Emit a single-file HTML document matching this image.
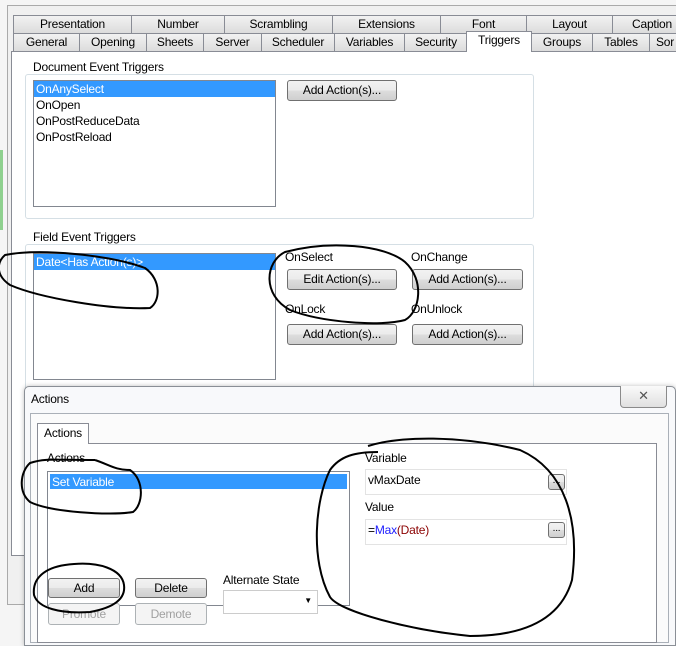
<!DOCTYPE html>
<html><head><meta charset="utf-8"><style>
*{box-sizing:border-box;margin:0;padding:0}
body{width:676px;height:638px;position:relative;overflow:hidden;background:#f5f5f5;font-family:"Liberation Sans",sans-serif;font-size:12px;color:#000;letter-spacing:-0.2px}
.a{position:absolute}
.tab{position:absolute;height:18px;border:1px solid #898c95;border-bottom:none;background:linear-gradient(#f2f2f2,#dcdcdc);text-align:center;line-height:17px;font-size:12px}
.btn{position:absolute;border:1px solid #707070;border-radius:3px;background:linear-gradient(#f2f2f2 0%,#ebebeb 50%,#dddddd 51%,#cfcfcf 100%);text-align:center;font-size:12px}
.grp{position:absolute;border:1px solid #d5dfe5;border-radius:3px}
.lbl{position:absolute;background:#fff;padding:0 2px;font-size:12px}
.list{position:absolute;border:1px solid #828790;background:#fff}
.sel{background:#3399ff;color:#fff;height:16px;line-height:16px;padding-left:2px}
.it{height:16px;line-height:16px;padding-left:2px}
.dis{color:#a0a0a0;border-color:#adb2b5;background:#f4f4f4}
</style></head><body>
<div class="a" style="left:7px;top:5px;width:680px;height:600px;border:1px solid #aaa;background:#f0f0f0"></div>
<div class="tab" style="left:13px;top:15px;width:119px">Presentation</div>
<div class="tab" style="left:131px;top:15px;width:94px">Number</div>
<div class="tab" style="left:224px;top:15px;width:109px">Scrambling</div>
<div class="tab" style="left:332px;top:15px;width:109px">Extensions</div>
<div class="tab" style="left:440px;top:15px;width:87px">Font</div>
<div class="tab" style="left:526px;top:15px;width:87px">Layout</div>
<div class="tab" style="left:612px;top:15px;width:80px">Caption</div>
<div class="tab" style="left:13px;top:33px;width:67px">General</div>
<div class="tab" style="left:79px;top:33px;width:68px">Opening</div>
<div class="tab" style="left:146px;top:33px;width:58px">Sheets</div>
<div class="tab" style="left:203px;top:33px;width:59px">Server</div>
<div class="tab" style="left:261px;top:33px;width:74px">Scheduler</div>
<div class="tab" style="left:334px;top:33px;width:71px">Variables</div>
<div class="tab" style="left:404px;top:33px;width:64px">Security</div>
<div class="tab" style="left:531px;top:33px;width:62px">Groups</div>
<div class="tab" style="left:592px;top:33px;width:58px">Tables</div>
<div class="tab" style="left:649px;top:33px;width:40px;text-align:left;padding-left:6px">Sor</div>
<div class="a" style="left:11px;top:51px;width:680px;height:505px;border:1px solid #898c95;background:#fff"></div>
<div class="tab" style="left:466px;top:31px;width:66px;height:21px;background:#fff;line-height:17px;z-index:2">Triggers</div>
<div class="a" style="left:0;top:150px;width:3px;height:80px;background:#8fd18f"></div>

<div class="grp" style="left:25px;top:74px;width:509px;height:145px"></div>
<div class="lbl" style="left:31px;top:60px">Document Event Triggers</div>
<div class="list" style="left:33px;top:80px;width:243px;height:127px">
<div class="sel">OnAnySelect</div><div class="it">OnOpen</div><div class="it">OnPostReduceData</div><div class="it">OnPostReload</div></div>
<div class="btn" style="left:287px;top:80px;width:110px;height:21px;line-height:19px">Add Action(s)...</div>

<div class="grp" style="left:25px;top:244px;width:509px;height:150px"></div>
<div class="lbl" style="left:31px;top:230px">Field Event Triggers</div>
<div class="list" style="left:33px;top:253px;width:243px;height:127px"><div class="sel">Date&lt;Has Action(s)&gt;</div></div>
<div class="a" style="left:285px;top:250px">OnSelect</div>
<div class="a" style="left:411px;top:250px">OnChange</div>
<div class="btn" style="left:287px;top:269px;width:110px;height:21px;line-height:19px">Edit Action(s)...</div>
<div class="btn" style="left:412px;top:269px;width:111px;height:21px;line-height:19px">Add Action(s)...</div>
<div class="a" style="left:285px;top:302px">OnLock</div>
<div class="a" style="left:411px;top:302px">OnUnlock</div>
<div class="btn" style="left:287px;top:324px;width:110px;height:21px;line-height:19px">Add Action(s)...</div>
<div class="btn" style="left:412px;top:324px;width:111px;height:21px;line-height:19px">Add Action(s)...</div>

<div class="a" style="left:24px;top:386px;width:652px;height:260px;border:1px solid #8a8f96;border-radius:5px 5px 0 0;background:#f8f9fb;box-shadow:0 0 5px rgba(0,0,0,.25)"></div>
<div class="a" style="left:31px;top:392px;font-size:12px">Actions</div>
<div class="a" style="left:620px;top:386px;width:47px;height:22px;border:1px solid #8a8a8a;border-top:none;border-radius:0 0 4px 4px;background:linear-gradient(#fafafa,#e0e0e0);text-align:center;color:#555;font-size:13px;line-height:19px">✕</div>
<div class="a" style="left:30px;top:413px;width:639px;height:230px;border:1px solid #aab0b8;background:#fbfbfb"></div>
<div class="a" style="left:37px;top:443px;width:620px;height:200px;border:1px solid #898c95;background:#fff"></div>
<div class="a" style="left:37px;top:423px;width:52px;height:21px;border:1px solid #898c95;border-bottom:none;background:#fff;text-align:center;line-height:18px">Actions</div>
<div class="a" style="left:47px;top:451px">Actions</div>
<div class="list" style="left:47px;top:471px;width:303px;height:135px"><div class="sel" style="margin:2px;height:15px">Set Variable</div></div>
<div class="a" style="left:365px;top:451px">Variable</div>
<div class="a" style="left:365px;top:469px;width:202px;height:26px;border:1px solid #e3e3e3;background:#fff;padding:3px 2px">vMaxDate</div>
<div class="btn" style="left:548px;top:474px;width:17px;height:16px;line-height:12px;font-size:10px">...</div>
<div class="a" style="left:365px;top:500px">Value</div>
<div class="a" style="left:365px;top:519px;width:202px;height:26px;border:1px solid #e3e3e3;background:#fff;padding:3px 2px">=<span style="color:#2020ff">Max</span><span style="color:#8b0000">(Date)</span></div>
<div class="btn" style="left:548px;top:522px;width:17px;height:16px;line-height:12px;font-size:10px">...</div>
<div class="btn" style="left:48px;top:578px;width:72px;height:20px;line-height:18px">Add</div>
<div class="btn" style="left:135px;top:578px;width:72px;height:20px;line-height:18px">Delete</div>
<div class="btn dis" style="left:48px;top:603px;width:72px;height:22px;line-height:20px">Promote</div>
<div class="btn dis" style="left:135px;top:603px;width:72px;height:22px;line-height:20px">Demote</div>
<div class="a" style="left:223px;top:573px">Alternate State</div>
<div class="a" style="left:223px;top:590px;width:95px;height:24px;border:1px solid #ccc;background:#fff"><span style="position:absolute;right:5px;top:5px;font-size:8px">▼</span></div>

<svg class="a" style="left:0;top:0" width="676" height="638" fill="none" stroke="#000" stroke-width="2">
<path d="M5,255 C40,248 110,255 145,268 C162,280 160,302 150,308 C110,310 40,298 10,285 C-5,275 -3,262 5,255 Z"/>
<path d="M285,252 C330,240 385,245 405,262 C425,280 420,312 405,320 C380,327 320,322 290,310 C262,295 265,262 285,252 Z"/>
<path d="M95,460 C110,465 115,470 130,470 C145,480 143,505 133,512 C110,516 50,512 30,502 C18,492 20,472 30,463 C45,458 55,460 95,460"/>
<path d="M368,446 C400,436 460,435 520,450 C565,470 580,520 572,580 C560,622 520,636 470,636 C410,630 340,612 330,597 C310,560 315,500 330,470 C340,456 355,452 378,452"/>
<path d="M65,565 C100,560 122,570 124,585 C126,600 112,608 90,612 C60,614 38,608 34,595 C32,578 45,568 65,565 Z"/>
</svg>
</body></html>
